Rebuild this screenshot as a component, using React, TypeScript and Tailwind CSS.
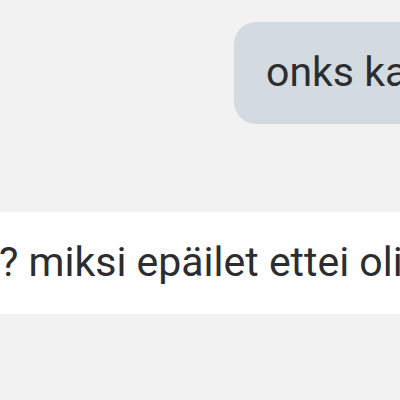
export default function App() {
    return (
        <div className="flex h-[400px] w-[400px] flex-col overflow-hidden bg-[#f2f2f2] font-['Roboto',sans-serif] text-[41px] text-[#2b2d30]">
            <div className="flex justify-end pt-[22px]">
                <div className="flex h-[102px] w-[200px] shrink-0 translate-x-[34px] items-center overflow-hidden whitespace-nowrap rounded-l-[22px] bg-[#d3dbe1] pl-[32px]">
                    onks kaikki
                </div>
            </div>
            <div className="mt-[88px] flex h-[102px] items-center overflow-hidden whitespace-nowrap bg-white pl-0">
                <span className="-ml-[1px]">? miksi epäilet ettei olis</span>
            </div>
        </div>
    );
}
